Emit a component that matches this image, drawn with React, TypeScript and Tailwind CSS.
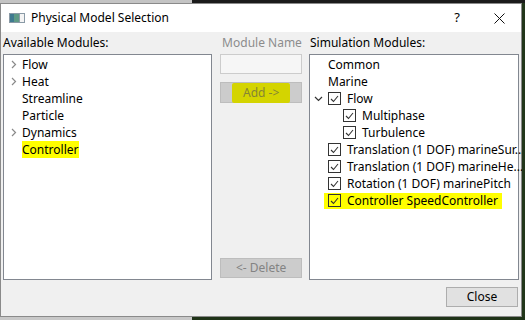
import React from "react";

const font = { fontFamily: '"Noto Sans", "Segoe UI", sans-serif' };

function Chevron() {
  return (
    <svg width="6" height="9" viewBox="0 0 6 9" className="shrink-0">
      <polyline points="1,1 4.5,4.5 1,8" fill="none" stroke="#8a8a8a" strokeWidth="1.2" />
    </svg>
  );
}

function ChevronDown() {
  return (
    <svg width="9" height="6" viewBox="0 0 9 6" className="shrink-0">
      <polyline points="1,1 4.5,4.5 8,1" fill="none" stroke="#333" strokeWidth="1.2" />
    </svg>
  );
}

function Check() {
  return (
    <span className="flex h-[13px] w-[13px] shrink-0 items-center justify-center border border-[#333]">
      <svg width="9" height="8" viewBox="0 0 9 8">
        <polyline points="1,4 3.5,6.5 8,1" fill="none" stroke="#333" strokeWidth="1.1" />
      </svg>
    </span>
  );
}

const available = [
  { label: "Flow", expand: true },
  { label: "Heat", expand: true },
  { label: "Streamline", expand: false },
  { label: "Particle", expand: false },
  { label: "Dynamics", expand: true },
];

export default function App() {
  return (
    <div className="flex h-[320px] w-[525px] flex-col bg-[#1f3318] text-[12px] text-black" style={font}>
      {/* desktop strip behind the dialog */}
      <div className="flex h-[3px]">
        <div className="w-[192px] bg-[#c4c4c4]" />
        <div className="flex-1 bg-[#1b1b1b]" />
      </div>
      <div className="flex">
        <div className="flex h-[314px] w-[522px] flex-col border border-[#8a8a8a] bg-[#f0f0f0]">
          {/* title bar */}
          <div className="flex h-[28px] items-center bg-white">
            <svg width="16" height="10" viewBox="0 0 16 10" className="ml-[8px]">
              <rect x="0" y="0" width="16" height="10" fill="#8a9aa6" />
              <rect x="1" y="1" width="9" height="8" fill="#5e9a86" />
              <rect x="1" y="1" width="4" height="8" fill="#3f7a90" />
              <rect x="11" y="1" width="4" height="8" fill="#f4f4f4" />
            </svg>
            <span className="ml-[6px]">Physical Model Selection</span>
            <span className="ml-auto mr-[34px] text-[13px]">?</span>
            <svg width="11" height="11" viewBox="0 0 11 11" className="mr-[16px]">
              <path d="M0.5 0.5 L10.5 10.5 M10.5 0.5 L0.5 10.5" stroke="#111" strokeWidth="1" />
            </svg>
          </div>

          {/* body */}
          <div className="flex flex-1 flex-col px-[2px]">
            <div className="flex h-[22px] items-center">
              <div className="w-[210px]">Available Modules:</div>
              <div className="ml-[8px] w-[82px] whitespace-nowrap text-center text-[#8c8c8c]">Module Name</div>
              <div className="ml-[7px]">Simulation Modules:</div>
            </div>
            <div className="flex h-[226px]">
              {/* left list */}
              <div className="flex w-[210px] flex-col border border-[#828790] bg-white pt-[1px]">
                {available.map((m) => (
                  <div key={m.label} className="flex h-[17px] items-center">
                    <span className="flex w-[18px] justify-end pr-[5px]">{m.expand ? <Chevron /> : null}</span>
                    <span>{m.label}</span>
                  </div>
                ))}
                <div className="flex h-[17px] items-center pl-[18px]">
                  <span className="bg-[#ffff00] px-[0px] leading-[17px]">Controller</span>
                </div>
              </div>

              {/* middle */}
              <div className="ml-[8px] flex w-[82px] flex-col pb-[2px]">
                <div className="h-[20px] border border-[#cccccc] bg-[#f6f6f6]" />
                <div className="mt-[8px] flex h-[21px] items-center justify-center border border-[#bdbdbd] bg-[#cccccc]">
                  <span className="rounded-[2px] bg-[#d4d400] px-[11px] leading-[20px] text-[#858535]">Add -&gt;</span>
                </div>
                <div className="mt-auto flex h-[20px] items-center justify-center border border-[#bdbdbd] bg-[#cccccc] text-[#838383]">
                  &lt;- Delete
                </div>
              </div>

              {/* right list */}
              <div className="ml-[7px] flex w-[210px] flex-col border border-[#828790] bg-white pt-[1px]">
                <div className="flex h-[17px] items-center pl-[18px]">Common</div>
                <div className="flex h-[17px] items-center pl-[18px]">Marine</div>
                <div className="flex h-[17px] items-center">
                  <span className="ml-[4px] mr-[5px]"><ChevronDown /></span>
                  <Check />
                  <span className="ml-[6px]">Flow</span>
                </div>
                <div className="flex h-[17px] items-center pl-[33px]">
                  <Check />
                  <span className="ml-[6px]">Multiphase</span>
                </div>
                <div className="flex h-[17px] items-center pl-[33px]">
                  <Check />
                  <span className="ml-[6px]">Turbulence</span>
                </div>
                <div className="flex h-[17px] items-center pl-[18px]">
                  <Check />
                  <span className="ml-[6px] whitespace-nowrap">Translation (1 DOF) marineSur...</span>
                </div>
                <div className="flex h-[17px] items-center pl-[18px]">
                  <Check />
                  <span className="ml-[6px] whitespace-nowrap">Translation (1 DOF) marineHe...</span>
                </div>
                <div className="flex h-[17px] items-center pl-[18px]">
                  <Check />
                  <span className="ml-[6px] whitespace-nowrap">Rotation (1 DOF) marinePitch</span>
                </div>
                <div className="flex h-[17px] items-center pl-[14px]">
                  <span className="flex h-[16px] items-center bg-[#ffff00] pl-[4px] pr-[4px]">
                    <Check />
                    <span className="ml-[6px] whitespace-nowrap">Controller SpeedController</span>
                  </span>
                </div>
              </div>
            </div>

            <div className="mt-[7px] flex justify-end pr-[1px]">
              <div className="flex h-[20px] w-[72px] items-center justify-center border border-[#adadad] bg-[#e1e1e1]">Close</div>
            </div>
          </div>
        </div>
        <div className="flex-1 bg-[#22361a]" />
      </div>
      <div className="flex h-[3px]">
        <div className="w-[192px] bg-[#c8c8c8]" />
        <div className="flex-1 bg-[#1f3318]" />
      </div>
    </div>
  );
}
